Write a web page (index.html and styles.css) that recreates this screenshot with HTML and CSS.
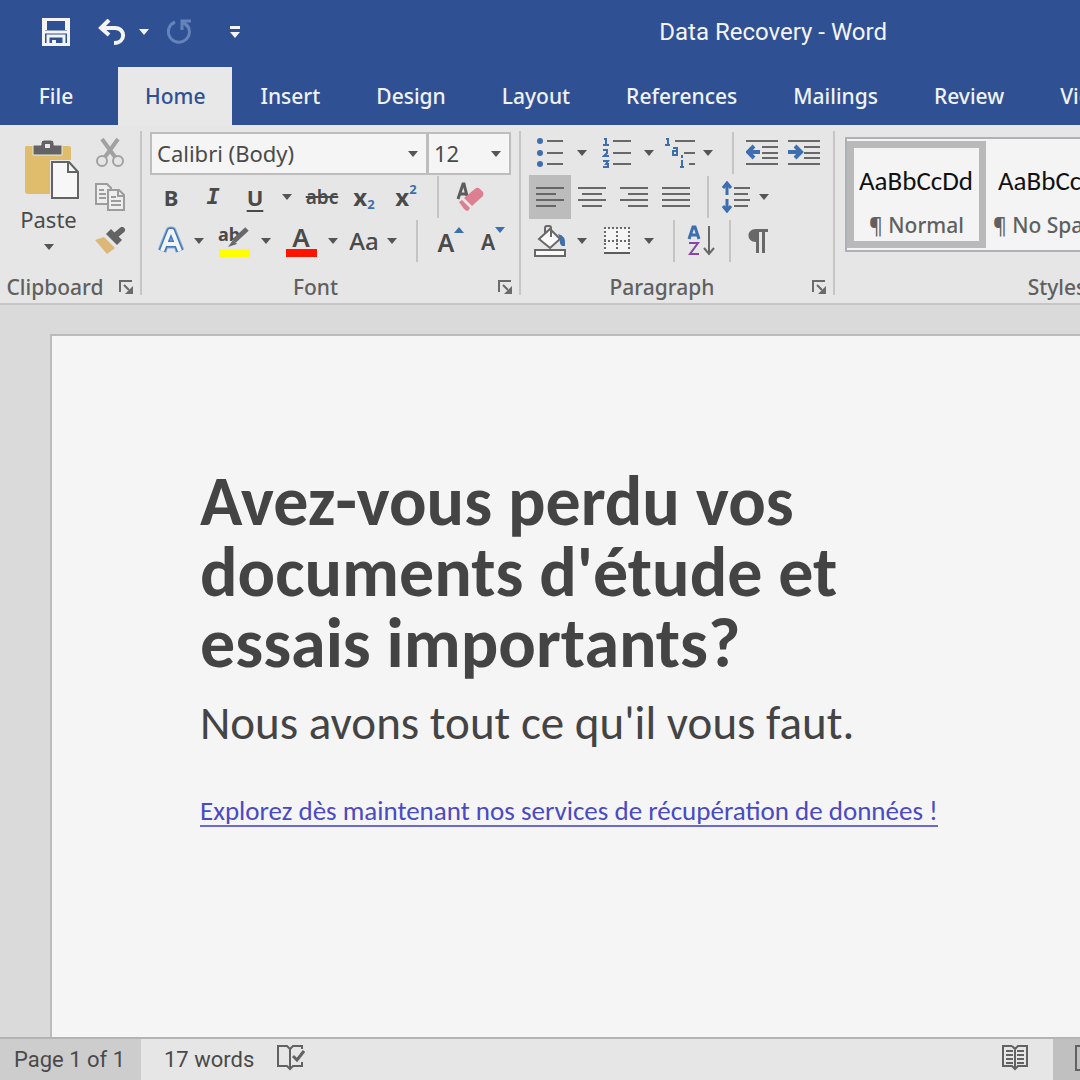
FILE: index.html
```
<!DOCTYPE html>
<html lang="fr">
<head>
  <meta charset="UTF-8">
  <title>Data Recovery - Word</title>
  <meta name="viewport" content="width=device-width, initial-scale=1.0">
  <link rel="stylesheet" href="styles.css">
</head>
<body>

<header class="title-bar">
  <div class="quick-access">
    <button class="btn" aria-label="Save">
      <svg width="28" height="28" fill="none" stroke="#f4f4f4" stroke-width="3"><path d="M1.500 1.500h25v25h-25zM2 14h24M6 26v-8h16v8"/><path d="M4 3v9M24 3v9" stroke-width="2"/><path d="M12 22v5" stroke-width="4"/></svg>
    </button>
    <div class="tools">
      <div class="split">
        <button class="btn" aria-label="Undo">
          <svg width="28" height="26" fill="none" stroke="#f4f4f4" stroke-width="4"><path d="M3 9h14c11 0 11 15-1 15"/><path d="M11 1L3 9l8 7"/></svg>
        </button>
        <button class="arrow" aria-label="Undo list"></button>
      </div>
      <button class="btn" aria-label="Redo">
        <svg width="26" height="26" fill="none" stroke="#6583b8" stroke-width="3"><path d="M9 3a10.500 10.500 0 1 0 11 2"/><path d="M25 2h-9v9M16 2l6 6"/></svg>
      </button>
    </div>
    <button class="btn" aria-label="Customize toolbar">
      <svg width="12" height="14" fill="#f4f4f4"><path d="M1 1h10v3H1zM1 7h10l-5 6z"/></svg>
    </button>
  </div>
  <div class="window-title">Data Recovery - Word</div>
</header>

<nav class="tabs">
  <button class="tab file">File</button>
  <button class="tab active">Home</button>
  <button class="tab">Insert</button>
  <button class="tab">Design</button>
  <button class="tab">Layout</button>
  <button class="tab">References</button>
  <button class="tab">Mailings</button>
  <button class="tab">Review</button>
  <button class="tab">View</button>
</nav>

<div class="ribbon">
  <!-- Clipboard -->
  <section class="group clipboard">
    <div class="group-body clipboard-body">
      <button class="paste">
        <svg width="56" height="60" viewBox="0 0 56 60">
          <path d="M2 6h43a2 2 0 0 1 2 2v46H4a3 3 0 0 1-3-3V7z" fill="#dfbd6c"/>
          <path d="M9 15V5h8V3q0-3 3-3h7q3 0 3 3v2h8v10z" fill="#636363" stroke="#e9e9e9" stroke-width="1"/>
          <path d="M21 4h5v4h-5z" fill="#e9e9e9"/>
          <path d="M26 20h30v40H26z" fill="#e9e9e9"/>
          <path d="M28 22h17l9 10v26H28z" fill="#f7f7f7" stroke="#636363" stroke-width="2"/>
          <path d="M44 22v10h10" fill="none" stroke="#636363" stroke-width="2"/>
        </svg>
        <span>Paste</span>
        <i class="caret"></i>
      </button>
      <div class="stack">
        <button class="btn" aria-label="Cut">
          <svg width="28" height="30" fill="none" stroke="#a1a1a1" stroke-width="2"><circle cx="6" cy="23" r="5"/><circle cx="22" cy="23" r="5"/><path d="M9 19L22 1M19 19L6 1" stroke-width="4"/></svg>
        </button>
        <button class="btn" aria-label="Copy">
          <svg width="30" height="28" fill="#ededed" stroke="#9c9c9c" stroke-width="2"><path d="M1 1h11l4 4v16H1z"/><path d="M4 7h5M4 11h7M4 15h7"/><path d="M13 7h11l5 5v15H13z"/><path d="M23 7v6h6M16 14h5M16 18h10M16 22h10" fill="none"/></svg>
        </button>
        <button class="btn" aria-label="Format painter">
          <svg width="32" height="28"><path d="M1 13l9-3 11 11-8 6z" fill="#dcb878"/><path d="M12 7l5-5 11 11-5 5z" fill="#636363"/><path d="M22 8l6-5" stroke="#636363" stroke-width="6" stroke-linecap="round"/></svg>
        </button>
      </div>
    </div>
    <div class="group-label"><span>Clipboard</span>
      <button class="launcher" aria-label="Clipboard options"><svg width="15" height="15"><path d="M1 12V1h12M5 5l5 5" fill="none" stroke="#6a6a6a" stroke-width="2"/><path d="M14 6v8H6z" fill="#6a6a6a"/></svg></button>
    </div>
  </section>

  <!-- Font -->
  <section class="group font">
    <div class="group-body">
      <div class="row">
        <label class="combo name"><select aria-label="Font name"><option>Calibri (Body)</option></select></label>
        <label class="combo size"><select aria-label="Font size"><option>12</option></select></label>
      </div>
      <div class="row">
        <button class="btn bold">B</button>
        <button class="btn italic">I</button>
        <div class="split">
          <button class="btn underline">U</button>
          <button class="arrow" aria-label="Underline styles"></button>
        </div>
        <button class="btn strike">abc</button>
        <button class="btn script">x<sub>2</sub></button>
        <button class="btn script">x<sup>2</sup></button>
        <i class="sep"></i>
        <button class="btn" aria-label="Clear formatting">
          <svg width="30" height="30"><path d="M3 17L8 2h1l3 12M5 12h7" fill="none" stroke="#5c5c5c" stroke-width="3"/><path d="M9 16L21 6q2-1 4 1l3 3q1 2 0 4L17 24z" fill="#dc7f90"/><path d="M4 20l3-2 8 8-2 3q-2 0-4-2z" fill="#dc7f90"/></svg>
        </button>
      </div>
      <div class="row third">
        <div class="split">
          <button class="btn narrow" aria-label="Text effects">
            <svg width="28" height="30" fill="none" stroke-linejoin="round"><path d="M5 25L13 5h2l8 20M9 18h10" stroke="#8fb0d8" stroke-width="9"/><path d="M5 25L13 5h2l8 20M9 18h10" stroke="#4377b5" stroke-width="7"/><path d="M5 25L13 5h2l8 20M9 18h10" stroke="#f1f5fa" stroke-width="4"/></svg>
          </button>
          <button class="arrow" aria-label="Effects list"></button>
        </div>
        <div class="split">
          <button class="btn color-btn marker"><b>ab</b><svg width="26" height="22"><path d="M23 2L10 14" stroke="#686868" stroke-width="5"/><path d="M9 13l4 4-9 3z" fill="#686868"/></svg></button>
          <button class="arrow" aria-label="Highlight colors"></button>
        </div>
        <div class="split">
          <button class="btn color-btn ink">A</button>
          <button class="arrow" aria-label="Font colors"></button>
        </div>
        <div class="split">
          <button class="btn narrow case">Aa</button>
          <button class="arrow" aria-label="Case list"></button>
        </div>
        <i class="sep"></i>
        <button class="btn grow">A<svg width="10" height="20"><path d="M0 6h10L5 0z" fill="#3c6eb0"/></svg></button>
        <button class="btn shrink">A<svg width="10" height="20"><path d="M0 0h10L5 6z" fill="#3c6eb0"/></svg></button>
      </div>
    </div>
    <div class="group-label"><span>Font</span>
      <button class="launcher" aria-label="Font options"><svg width="15" height="15"><path d="M1 12V1h12M5 5l5 5" fill="none" stroke="#6a6a6a" stroke-width="2"/><path d="M14 6v8H6z" fill="#6a6a6a"/></svg></button>
    </div>
  </section>

  <!-- Paragraph -->
  <section class="group paragraph">
    <div class="group-body">
      <div class="row">
        <div class="split">
          <button class="btn" aria-label="Bullets">
            <svg width="28" height="30"><g fill="#3c6eb0"><circle cx="4" cy="3" r="3"/><circle cx="4" cy="15" r="3"/><circle cx="4" cy="26" r="3"/></g><path d="M11 3h16M11 15h16M11 26h16" stroke="#686868" stroke-width="2"/></svg>
          </button>
          <button class="arrow" aria-label="Bullet list"></button>
        </div>
        <div class="split">
          <button class="btn" aria-label="Numbering">
            <svg width="30" height="32"><path d="M2 2h2v6M1 8h6M1 13h4v3l-3 3h5M1 24h5l-2 3h2v3H1" fill="none" stroke="#3c6eb0" stroke-width="2"/><path d="M11 4h18M11 16h18M11 27h18" stroke="#686868" stroke-width="2"/></svg>
          </button>
          <button class="arrow" aria-label="Numbering list"></button>
        </div>
        <div class="split">
          <button class="btn narrow" aria-label="Multilevel list">
            <svg width="32" height="32"><path d="M2 2h2v6M1 8h5M9 11h4v7H9v-4h4M18 18v3M18 23v7M16 30h4" fill="none" stroke="#3c6eb0" stroke-width="2"/><path d="M11 4h20M20 16h11M25 27h6" stroke="#686868" stroke-width="2"/></svg>
          </button>
          <button class="arrow" aria-label="Multilevel styles"></button>
        </div>
        <i class="sep"></i>
        <div class="tools indents">
          <button class="btn" aria-label="Decrease indent">
            <svg width="32" height="28"><path d="M0 2h32M16 8h16M16 14h16M16 19h16M0 25h32" stroke="#686868" stroke-width="2"/><path d="M14 13H3M8 7l-6 6 6 6" fill="none" stroke="#3c6eb0" stroke-width="4"/></svg>
          </button>
          <button class="btn" aria-label="Increase indent">
            <svg width="32" height="28"><path d="M0 2h32M16 8h16M16 14h16M16 19h16M0 25h32" stroke="#686868" stroke-width="2"/><path d="M0 13h11M7 7l6 6-6 6" fill="none" stroke="#3c6eb0" stroke-width="4"/></svg>
          </button>
        </div>
      </div>
      <div class="row">
        <button class="btn selected" aria-label="Align left">
          <svg width="28" height="22"><path d="M0 2h28M0 8h20M0 14h28M0 20h20" stroke="#666" stroke-width="2"/></svg>
        </button>
        <button class="btn" aria-label="Center">
          <svg width="28" height="22"><path d="M0 2h28M4 8h20M0 14h28M4 20h20" stroke="#686868" stroke-width="2"/></svg>
        </button>
        <button class="btn" aria-label="Align right">
          <svg width="28" height="22"><path d="M0 2h28M8 8h20M0 14h28M8 20h20" stroke="#686868" stroke-width="2"/></svg>
        </button>
        <button class="btn" aria-label="Justify">
          <svg width="28" height="22"><path d="M0 2h28M0 8h28M0 14h28M0 20h28" stroke="#686868" stroke-width="2"/></svg>
        </button>
        <i class="sep"></i>
        <div class="split">
          <button class="btn narrow" aria-label="Line spacing">
            <svg width="28" height="32"><path d="M5 14V3M1 7l4-5 4 5M5 18v11M1 25l4 5 4-5" fill="none" stroke="#3c6eb0" stroke-width="3"/><path d="M12 7h16M12 13h14M12 19h16M12 25h14" stroke="#686868" stroke-width="2"/></svg>
          </button>
          <button class="arrow" aria-label="Spacing list"></button>
        </div>
      </div>
      <div class="row">
        <div class="split">
          <button class="btn" aria-label="Shading">
            <svg width="32" height="32"><path d="M1 25h30v6H1z" fill="#fafafa" stroke="#686868" stroke-width="2"/><path d="M24 9q8 1 7 12h-3q-3-2-2-7z" fill="#3c6eb0"/><path d="M5 14L16 4l10 10-10 9z" fill="#fafafa" stroke="#686868" stroke-width="2"/><path d="M11 8V3q0-2 2-2h2q2 0 2 2v9" fill="none" stroke="#686868" stroke-width="2"/></svg>
          </button>
          <button class="arrow" aria-label="Shading colors"></button>
        </div>
        <div class="split">
          <button class="btn" aria-label="Borders">
            <svg width="26" height="28"><path d="M0 1h26v24H0z" fill="#f5f5f5"/><path d="M0 1h26M0 14h26M1 0v24M13 0v24M25 0v24" stroke="#686868" stroke-width="2" stroke-dasharray="2 2"/><path d="M0 26h26" stroke="#5c5c5c" stroke-width="2"/></svg>
          </button>
          <button class="arrow" aria-label="Border list"></button>
        </div>
        <i class="sep"></i>
        <button class="btn narrow" aria-label="Sort">
          <svg width="30" height="32" fill="none" stroke-width="3"><path d="M2 14L6 2h2l4 12M4 10h7" stroke="#3c6eb0"/><path d="M2 18h9L3 29h9" stroke="#8646a8" stroke-width="2"/><path d="M22 1v27M17 23l5 6 5-6" stroke="#686868" stroke-width="2"/></svg>
        </button>
        <i class="sep"></i>
        <button class="btn narrow" aria-label="Show paragraph marks">
          <svg width="20" height="24" fill="#686868"><path d="M8 0h12v3h-3v21h-3V3h-3v21H8V13C-2 13-2 0 8 0z"/></svg>
        </button>
      </div>
    </div>
    <div class="group-label"><span>Paragraph</span>
      <button class="launcher" aria-label="Paragraph options"><svg width="15" height="15"><path d="M1 12V1h12M5 5l5 5" fill="none" stroke="#6a6a6a" stroke-width="2"/><path d="M14 6v8H6z" fill="#6a6a6a"/></svg></button>
    </div>
  </section>

  <!-- Styles -->
  <section class="group styles">
    <div class="group-body">
      <div class="gallery">
        <button class="style-card current"><span class="sample">AaBbCcDd</span><span class="style-name">¶ Normal</span></button>
        <button class="style-card"><span class="sample">AaBbCcDd</span><span class="style-name">¶ No Spacing</span></button>
      </div>
    </div>
    <div class="group-label"><span>Styles</span></div>
  </section>
</div>

<main class="workspace">
  <article class="page">
    <h1>Avez-vous perdu vos documents d'étude et essais importants?</h1>
    <p>Nous avons tout ce qu'il vous faut.</p>
    <a href="#">Explorez dès maintenant nos services de récupération de données !</a>
  </article>
</main>

<footer class="status-bar">
  <button class="status-item page-count">Page 1 of 1</button>
  <button class="status-item">17 words</button>
  <button class="status-icon" aria-label="Proofing">
    <svg width="28" height="26" fill="none" stroke="#626262" stroke-width="2"><path d="M13 4l-3-3H1v20h9l3 3 3-3h9v-4M13 4v19M13 4l3-3h9v3"/><path d="M16 11l4 4 7-9" stroke-width="3"/></svg>
  </button>
  <div class="views">
    <button class="status-icon" aria-label="Read mode">
      <svg width="26" height="26" fill="none" stroke="#626262" stroke-width="2"><path d="M10 1H1v20h9l3 3 3-3h9V1h-9l-3 3-3-3M13 3v20M4 6h7M4 10h7M4 14h7M4 18h7M15 6h7M15 10h7M15 14h7M15 18h7"/></svg>
    </button>
    <button class="status-icon print" aria-label="Print layout">
      <svg width="26" height="26" fill="none" stroke="#626262" stroke-width="2"><path d="M1 1h24v24H1zM6 8h14M6 13h14M6 18h14"/></svg>
    </button>
  </div>
</footer>

</body>
</html>
```
FILE: styles.css
```
* { margin: 0; padding: 0; box-sizing: border-box; }
body {
  min-height: 100vh;
  display: flex;
  flex-direction: column;
  overflow: hidden;
  font-family: "Noto Sans", sans-serif;
  font-size: 22px;
  line-height: 30px;
  color: #4a4a4a;
  background-color: #dadada;
}
button { border: none; background: none; color: inherit; font: inherit; cursor: pointer; }
svg { display: block; flex: none; }

/* title bar */
.title-bar {
  display: flex;
  align-items: center;
  justify-content: space-between;
  height: 67px;
  padding: 0 193px 4px 35px;
  background-color: #2f5194;
  color: #f4f4f4;
}
.quick-access { display: flex; gap: 14px; }
.window-title { font-family: Roboto, sans-serif; font-size: 24px; white-space: nowrap; }

/* tabs */
.tabs { display: flex; height: 58px; background-color: #2f5194; overflow: hidden; }
.tab { flex: none; padding: 0 28px; font-size: 21px; font-weight: 500; color: #f0f2f6; }
.tab.file { width: 118px; padding: 0 34px 0 28px; }
.tab.active { padding: 0 27px; background-color: #e8e8e8; color: #2f5194; }

/* ribbon */
.ribbon {
  display: flex;
  padding-top: 6px;
  background-color: #e6e6e6;
  border-bottom: 2px solid #c6c6c6;
  overflow: hidden;
}
.group { position: relative; flex: none; height: 172px; }
.group::after { content: ""; position: absolute; top: 0; right: 0; width: 2px; height: 164px; background-color: #c6c6c6; }
.group-body { height: 132px; }
.clipboard { width: 142px; }
.font { width: 379px; padding-left: 8px; }
.paragraph { width: 314px; padding-left: 8px; }
.styles { width: 444px; padding-left: 10px; }
.group-label { display: flex; align-items: center; height: 40px; padding-top: 8px; font-size: 21px; font-weight: 500; color: #606060; }
.group-label span { flex: 1; text-align: center; }
.font .group-label, .paragraph .group-label { margin-left: -8px; }
.styles .group-label { margin-left: -10px; }
.launcher { width: 32px; height: 30px; display: flex; align-items: center; justify-content: center; }

.row { display: flex; align-items: center; height: 44px; }
.row.third { padding-left: 4px; }
.tools { display: flex; }
.indents { margin-left: -3px; }
.split { display: flex; margin-right: 3px; }
.btn { width: 42px; height: 44px; display: flex; align-items: center; justify-content: center; flex: none; }
.btn.narrow { width: 34px; }
.btn.selected { background-color: #bcbcbc; }
.arrow { width: 22px; height: 44px; display: flex; align-items: center; justify-content: center; flex: none; }
.arrow::after, .caret, .combo::after {
  content: "";
  border: 5px solid transparent;
  border-top: 6px solid #555;
  border-bottom: none;
}
.title-bar .arrow::after { border-top-color: #f4f4f4; }
.sep { width: 2px; height: 42px; margin: 0 10px; background-color: #c4c4c4; }

/* clipboard */
.clipboard-body { display: flex; }
.paste { width: 89px; padding: 9px 0 0 8px; display: flex; flex-direction: column; align-items: center; }
.paste svg { margin-left: 6px; }
.paste span { margin: 4px 0 10px; }

/* font */
.combo { position: relative; height: 43px; display: flex; }
.combo.name { width: 278px; }
.combo.size { width: 84px; margin-left: -1px; }
.combo select {
  width: 100%;
  padding-left: 5px;
  border: 2px solid #bdbdbd;
  background-color: #f5f5f5;
  color: #4a4a4a;
  font: inherit;
  appearance: none;
}
.combo::after { position: absolute; right: 10px; top: 19px; }
.bold { font-weight: 700; }
.italic { font-family: "DejaVu Sans Mono", monospace; font-style: italic; font-weight: 700; }
.underline { font-weight: 700; text-decoration: underline; text-underline-offset: 4px; text-decoration-thickness: 2px; }
.strike { font-size: 19px; font-weight: 600; text-decoration: line-through; text-decoration-thickness: 2px; }
.script { font-size: 24px; font-weight: 700; }
.script sub, .script sup { font-size: 13px; line-height: 13px; color: #3c6eb0; }
.script sub { align-self: flex-end; margin-bottom: 8px; }
.script sup { align-self: flex-start; margin-top: 8px; }
.color-btn { position: relative; height: 32px; margin-top: 6px; border: solid transparent; border-width: 0 6px; }
.color-btn::after { content: ""; position: absolute; left: 0; bottom: 0; width: 31px; height: 8px; background-color: #ff1400; }
.marker::after { background-color: #ffff00; }
.marker b { font-size: 18px; line-height: 18px; align-self: flex-start; }
.marker svg { margin-left: -16px; margin-bottom: 6px; }
.ink { font-size: 26px; font-weight: 600; line-height: 24px; align-items: flex-start; }
.case { font-size: 24px; font-weight: 500; }
.grow, .shrink { font-weight: 600; align-items: flex-end; padding: 0 0 6px 4px; }
.grow { font-size: 25px; }
.shrink { font-size: 21px; }
.grow svg, .shrink svg { align-self: flex-start; margin-top: 8px; }

/* styles gallery */
.styles .group-body { padding-top: 6px; }
.gallery { display: flex; height: 115px; border: 2px solid #adb0b5; background-color: #f4f4f4; overflow: hidden; }
.style-card { width: 139px; padding: 14px 5px 0; border: 7px solid transparent; margin: 2px 0; overflow: hidden; text-align: left; white-space: nowrap; flex: none; }
.style-card.current { border-color: #b9b9b9; }
.style-card span { display: block; overflow: hidden; }
.sample { font-family: Carlito, Lato, sans-serif; font-size: 27px; color: #111; line-height: 36px; }
.style-card .style-name { margin: 11px -5px 0; font-size: 21px; font-weight: 500; text-align: center; color: #606060; overflow: visible; }

/* document */
.workspace { flex: 1; display: flex; padding: 29px 0 0 50px; }
.page { flex: 1; padding: 130px 148px 80px; background-color: #f5f5f6; border: solid #bbb; border-width: 2px 0 0 2px; font-family: Carlito, Lato, sans-serif; color: #444; }
h1 { max-width: 680px; font-size: 70px; line-height: 71px; }
p { margin-top: 20px; font-size: 47px; line-height: 48px; }
.page a { display: inline-block; margin-top: 50px; font-size: 27px; line-height: 28px; color: #4a4ac4; text-decoration: none; border-bottom: 2px solid #6a6ad0; white-space: nowrap; }

/* status bar */
.status-bar { display: flex; height: 43px; background-color: #e6e6e6; border-top: 2px solid #b4b4b4; font-family: Roboto, sans-serif; }
.status-item { padding: 0 10px 0 23px; }
.page-count { width: 141px; padding: 0 2px 0 0; background-color: #cdcdcd; }
.status-icon { width: 54px; display: flex; align-items: center; justify-content: center; padding-bottom: 3px; }
.views { display: flex; margin-left: auto; margin-right: -15px; }
.views .status-icon { width: 76px; }
.views .print { width: 42px; padding-left: 22px; justify-content: flex-start; background-color: #c0c0c0; overflow: hidden; }
```
